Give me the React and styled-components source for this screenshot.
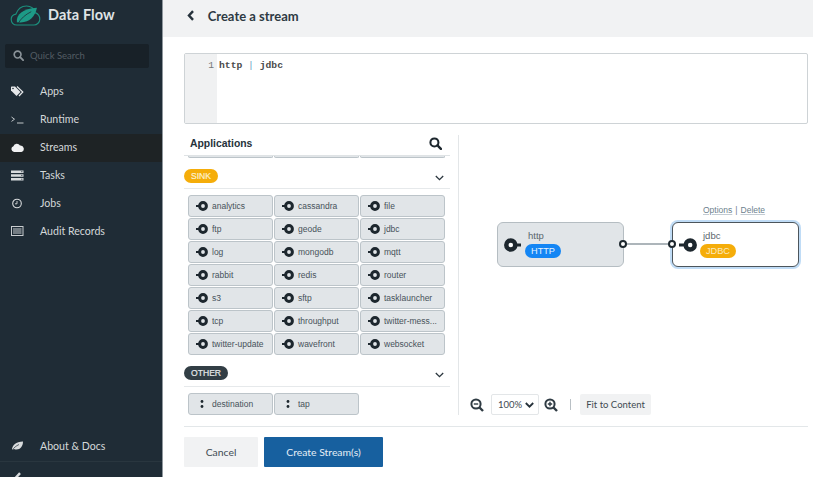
import React from 'react';
import styled, { createGlobalStyle } from 'styled-components';

const GlobalStyle = createGlobalStyle`
  html, body { margin: 0; padding: 0; height: 100%; overflow: hidden; background: #fff; }
  #root { height: 100%; }
  * { box-sizing: border-box; }
`;

const Page = styled.div`
  display: flex;
  width: 813px;
  height: 477px;
  overflow: hidden;
  font-family: 'Open Sans', sans-serif;
`;

/* sidebar */
const Sidebar = styled.aside`
  width: 163px;
  flex: none;
  display: flex;
  flex-direction: column;
  background: #1f2c36;
  border-right: 1px solid #8f979d;
`;

const Brand = styled.div`
  height: 44px;
  flex: none;
  padding: 4px 0 0 10px;
  display: flex;
  align-items: flex-start;
  gap: 7px;
  color: #dfe3e5;
  font-family: 'Lato', sans-serif;
  font-size: 14.5px;
  font-weight: 700;
  line-height: 22px;
  letter-spacing: 0.1px;

  svg { margin-top: 1px; }
`;

const Search = styled.div`
  height: 24px;
  flex: none;
  margin: 0 13px 0 5px;
  padding: 0 0 1px 8px;
  display: flex;
  align-items: center;
  gap: 6px;
  background: #182128;
  border-radius: 2px;
  color: #535c63;
  font-family: 'Lato', sans-serif;
  font-size: 9.5px;
`;

const Nav = styled.nav`
  margin-top: 10px;
  display: flex;
  flex-direction: column;
`;

const NavItem = styled.div`
  height: 28px;
  padding: 0 0 2px 11px;
  display: flex;
  align-items: center;
  gap: 16px;
  color: #d4d8da;
  font-family: 'Lato', sans-serif;
  font-size: 10.6px;
  background: ${(props) => (props.$active ? '#1e2325' : 'transparent')};

  svg { flex: none; }
`;

const SideFooter = styled.div`
  margin-top: auto;
  display: flex;
  flex-direction: column;
`;

const Collapse = styled.div`
  height: 16px;
  padding: 4px 0 0 14px;
  border-top: 1px solid #29363f;
  overflow: hidden;
`;

/* main column */
const Main = styled.main`
  flex: 1;
  min-width: 0;
  display: flex;
  flex-direction: column;
`;

const Header = styled.header`
  height: 37px;
  flex: none;
  padding: 0 0 6px 24px;
  display: flex;
  align-items: center;
  gap: 13px;
  background: #f1f2f3;
  color: #2e3a43;
  font-family: 'Lato', sans-serif;
  font-size: 13px;
  font-weight: 700;
`;

const Content = styled.div`
  flex: 1;
  padding: 16px 5px 10px 21px;
  display: flex;
  flex-direction: column;
  min-height: 0;
`;

const Editor = styled.div`
  height: 71px;
  flex: none;
  display: flex;
  border: 1px solid #ced3d6;
  border-radius: 2px;
  font-family: 'Liberation Mono', monospace;
  font-size: 9.7px;
  font-weight: 700;
  line-height: 12px;
  color: #4a4a4a;
`;

const Gutter = styled.div`
  width: 32px;
  flex: none;
  padding: 6px 3px 0 0;
  text-align: right;
  font-weight: 400;
  color: #77797b;
  background: #f0f1f2;
`;

const Code = styled.div`
  padding: 6px 0 0 2px;
  white-space: pre;
`;

const Pipe = styled.span`
  color: #6aa3c4;
  font-weight: 400;
`;

const Workspace = styled.div`
  height: 280px;
  flex: none;
  margin-top: 11px;
  display: flex;
`;

const Palette = styled.section`
  width: 275px;
  flex: none;
  padding-right: 8px;
  border-right: 1px solid #e3e6e8;
  font-family: 'Liberation Sans', sans-serif;
  overflow: hidden;
`;

const PaletteHead = styled.div`
  height: 21px;
  padding: 0 8px 4px 6px;
  display: flex;
  align-items: center;
  justify-content: space-between;
  border-bottom: 1px solid #dfe3e5;
  color: #26323b;
  font-size: 10.4px;
  font-weight: 700;
`;

const Stubs = styled.div`
  height: 2px;
  margin: 0 0 0 4px;
  display: grid;
  grid-template-columns: repeat(3, 85px);
  gap: 1px;
`;

const Stub = styled.div`
  background: #e1e5e8;
  border: solid #bcc4c9;
  border-width: 0 1px 1px 1px;
  border-radius: 0 0 2px 2px;
`;

const GroupHead = styled.div`
  height: ${(props) => props.$height}px;
  padding: ${(props) => props.$top}px 6px 0 0;
  display: flex;
  align-items: flex-start;
  justify-content: space-between;
  border-bottom: 1px solid #e6e9eb;
`;

const Badge = styled.span`
  height: 14px;
  padding: 0 7px;
  display: inline-flex;
  align-items: center;
  border-radius: 7px;
  color: ${(props) => (props.$dark ? '#e7eaec' : '#fdf0d0')};
  background: ${(props) => (props.$dark ? '#323e45' : '#f5ad0a')};
  font-size: 8.6px;
  font-weight: 400;
  -webkit-text-stroke: 0.2px currentColor;
`;

const Chevron = styled.span`
  margin-top: 6px;
  line-height: 0;
`;

const AppGrid = styled.div`
  margin: 6px 0 0 4px;
  display: grid;
  grid-template-columns: repeat(3, 85px);
  grid-auto-rows: 22px;
  gap: 1px;
`;

const AppButton = styled.div`
  padding-left: 7px;
  display: flex;
  align-items: center;
  gap: 4px;
  min-width: 0;
  background: #e1e5e8;
  border: 1px solid #bcc4c9;
  border-radius: 3px;
  color: #47525a;
  font-size: 8.5px;
  white-space: nowrap;
  overflow: hidden;

  svg { flex: none; }
`;

/* flow canvas */
const Canvas = styled.section`
  flex: 1;
  position: relative;
  min-width: 0;
  font-family: 'Liberation Sans', sans-serif;
`;

const Node = styled.div`
  position: absolute;
  top: 87px;
  left: ${(props) => props.$left}px;
  width: 127px;
  height: 45px;
  padding: 7px 0 0 30px;
  border: 1px solid ${(props) => (props.$selected ? '#4c555c' : '#b5bdc2')};
  border-radius: 6px;
  background: ${(props) => (props.$selected ? '#fff' : '#e1e5e8')};
  box-shadow: ${(props) => (props.$selected ? '0 0 0 2px #c0dcf6' : 'none')};
  color: #5a656c;
  font-size: 9.5px;
  line-height: 11px;
`;

const NodeType = styled.div`
  width: 36px;
  height: 14px;
  margin: 3px 0 0 -3px;
  display: flex;
  align-items: center;
  justify-content: center;
  border-radius: 7px;
  color: ${(props) => (props.$kind === 'sink' ? '#fbe9bd' : '#e6f2ff')};
  background: ${(props) => (props.$kind === 'sink' ? '#f5ad0a' : '#1486f4')};
  font-size: 9.2px;
`;

const Wire = styled.div`
  position: absolute;
  top: 108px;
  left: 165px;
  width: 48px;
  height: 2px;
  background: #adb5ba;
`;

const Port = styled.div`
  position: absolute;
  top: 105px;
  left: ${(props) => props.$left}px;
  width: 8px;
  height: 8px;
  border: 2px solid #1d272e;
  border-radius: 50%;
  background: #fff;
`;

const NodeIcon = styled.svg`
  position: absolute;
  top: 14px;
  left: ${(props) => props.$left}px;
`;

const NodeActions = styled.div`
  position: absolute;
  top: 70px;
  left: 244px;
  display: flex;
  gap: 3px;
  color: #6d7f8d;
  font-size: 8.5px;
  line-height: 11px;
`;

const ActionLink = styled.span`
  text-decoration: underline;
  text-decoration-color: #c3ccd3;
`;

const ZoomBar = styled.div`
  position: absolute;
  left: 11px;
  top: 259px;
  display: flex;
  align-items: center;
  font-family: 'Lato', sans-serif;
  font-size: 9.5px;
  color: #3f4a52;
`;

const ZoomSelect = styled.div`
  width: 48px;
  height: 21px;
  margin: 0 5px 0 7px;
  padding-left: 6px;
  display: flex;
  align-items: center;
  gap: 3px;
  border: 1px solid #e3e6e8;
  border-radius: 2px;
`;

const ZoomDivider = styled.div`
  width: 1px;
  height: 11px;
  margin: 0 9px 0 12px;
  background: #b9c0c5;
`;

const FitButton = styled.div`
  width: 71px;
  height: 21px;
  display: flex;
  align-items: center;
  justify-content: center;
  background: #f1f2f3;
  border-radius: 2px;
`;

/* footer */
const Footer = styled.div`
  margin-top: 11px;
  padding-top: 10px;
  display: flex;
  gap: 6px;
  border-top: 1px solid #e3e7e9;
`;

const Button = styled.div`
  height: 30px;
  width: ${(props) => props.$width}px;
  display: flex;
  align-items: center;
  justify-content: center;
  font-family: 'Lato', sans-serif;
  font-size: 10.4px;
  color: ${(props) => (props.$primary ? '#e5eef6' : '#414c54')};
  background: ${(props) => (props.$primary ? '#17609f' : '#f1f2f3')};
  border-radius: 1px;
`;

/* icons */
const SpringLogo = () => (
  <svg width="31" height="21" viewBox="0 0 32 22">
    <path d="M7 21C3 21 1 18 1 15c0-3 2-5 5-5.500C8 4 12 1 17 1c5 0 8 3 9 7 3 1 5 4 5 7 0 3-3 6-6 6H7z" fill="none" stroke="#1c8f7d" strokeWidth="1.200" />
    <path d="M7 18C6 10 13 4 28 3c-2 10-9 17-21 15z" fill="#1d9a86" />
    <path d="M8 20c3-6 8-10 14-13" fill="none" stroke="#1f2c36" strokeWidth="0.800" />
  </svg>
);

const SearchGlyph = ({ size = 11, color = '#8a9298', width = 1.800 }) => (
  <svg width={size} height={size} viewBox="0 0 12 12">
    <circle cx="5" cy="5" r="3.700" fill="none" stroke={color} strokeWidth={width} />
    <path d="M7.800 7.800L11 11" stroke={color} strokeWidth={width + 0.3} strokeLinecap="round" />
  </svg>
);

const TagsIcon = () => (
  <svg width="13" height="11" viewBox="0 0 13 11">
    <path d="M0 1v3.500L5.500 10l4-4L4 0.500H.5z" fill="#e6e8ea" />
    <path d="M6 .5l5.800 5.500-3.800 4" fill="none" stroke="#e6e8ea" strokeWidth="1.200" />
    <circle cx="2" cy="2.500" r="0.800" fill="#1f2c36" />
  </svg>
);

const TerminalIcon = () => (
  <svg width="13" height="9" viewBox="0 0 13 9">
    <path d="M.5 2l3 2.200-3 2.200" fill="none" stroke="#d4d8da" strokeWidth="0.900" />
    <path d="M6 8h6.500" stroke="#d4d8da" strokeWidth="0.900" />
  </svg>
);

const CloudIcon = () => (
  <svg width="13" height="9" viewBox="0 0 13 9">
    <path d="M3 9a3 3 0 0 1-.6-5.800A3.600 3.600 0 0 1 9 2.600 3.300 3.300 0 0 1 10.500 9H3z" fill="#f0f1f2" />
  </svg>
);

const TasksIcon = () => (
  <svg width="13" height="11" viewBox="0 0 13 11">
    <path d="M0 .5h12.500v2.500H0zM0 4.200h12.500v2.500H0zM0 8h12.500v2.500H0z" fill="#d8dbdd" />
    <path d="M10 1.700h1.500M10 5.400h1.500M10 9.200h1.500" stroke="#1f2c36" strokeWidth="0.700" />
  </svg>
);

const ClockIcon = () => (
  <svg width="13" height="11" viewBox="0 0 13 11">
    <circle cx="6" cy="5.500" r="4.300" fill="none" stroke="#d8dbdd" strokeWidth="1.100" />
    <path d="M6 3v2.800H4" fill="none" stroke="#d8dbdd" strokeWidth="0.900" />
  </svg>
);

const RecordsIcon = () => (
  <svg width="13" height="10" viewBox="0 0 13 10">
    <rect x="0.500" y="0.500" width="11.500" height="9" fill="none" stroke="#c9cdd0" strokeWidth="1" />
    <path d="M2 3h8.500M2 5h8.500M2 7h8.500" stroke="#c9cdd0" strokeWidth="1" />
  </svg>
);

const LeafIcon = () => (
  <svg width="13" height="10" viewBox="0 0 13 10">
    <path d="M1 9c0-5 4-8 11-8.500C12 6 8 10 3 8z" fill="#d8dbdd" />
    <path d="M1 9.500C3 6.500 5 5 8 3.500" stroke="#1f2c36" strokeWidth="0.700" fill="none" />
  </svg>
);

const ChevronLeft = ({ color, size = 9 }) => (
  <svg width={size * 0.7} height={size} viewBox="0 0 7 10">
    <path d="M5.500 1L1.800 5l3.700 4" fill="none" stroke={color} strokeWidth="2.200" />
  </svg>
);

const ChevronDown = ({ width = 9, color = '#2b363e', stroke = 1.300 }) => (
  <svg width={width} height="6" viewBox="0 0 9 6">
    <path d="M.8 1l3.700 3.700L8.200 1" fill="none" stroke={color} strokeWidth={stroke} />
  </svg>
);

const SinkPort = () => (
  <svg width="12" height="10" viewBox="0 0 12 10">
    <path d="M0 5h4" stroke="#1d272e" strokeWidth="2" />
    <circle cx="7" cy="5" r="3.400" fill="#e1e5e8" stroke="#1d272e" strokeWidth="3" />
  </svg>
);

const Dots = () => (
  <svg width="12" height="8" viewBox="0 0 12 8">
    <circle cx="6" cy="1.500" r="1.400" fill="#1d272e" />
    <circle cx="6" cy="6.500" r="1.400" fill="#1d272e" />
  </svg>
);

const ZoomOut = () => (
  <svg width="14" height="14" viewBox="0 0 14 14">
    <circle cx="6" cy="6" r="4.600" fill="none" stroke="#2f3b43" strokeWidth="2" />
    <path d="M9.500 9.500L13 13" stroke="#2f3b43" strokeWidth="2.400" />
    <path d="M3.800 6h4.400" stroke="#2f3b43" strokeWidth="1.400" />
  </svg>
);

const ZoomIn = () => (
  <svg width="14" height="14" viewBox="0 0 14 14">
    <circle cx="6" cy="6" r="4.600" fill="none" stroke="#2f3b43" strokeWidth="2" />
    <path d="M9.500 9.500L13 13" stroke="#2f3b43" strokeWidth="2.400" />
    <path d="M3.800 6h4.400M6 3.800v4.400" stroke="#2f3b43" strokeWidth="1.400" />
  </svg>
);

const navItems = [
  { label: 'Apps', icon: <TagsIcon /> },
  { label: 'Runtime', icon: <TerminalIcon /> },
  { label: 'Streams', icon: <CloudIcon />, active: true },
  { label: 'Tasks', icon: <TasksIcon /> },
  { label: 'Jobs', icon: <ClockIcon /> },
  { label: 'Audit Records', icon: <RecordsIcon /> },
];

const sinks = [
  'analytics', 'cassandra', 'file',
  'ftp', 'geode', 'jdbc',
  'log', 'mongodb', 'mqtt',
  'rabbit', 'redis', 'router',
  's3', 'sftp', 'tasklauncher',
  'tcp', 'throughput', 'twitter-mess...',
  'twitter-update', 'wavefront', 'websocket',
];

const App = () => (
  <Page>
    <GlobalStyle />
    <Sidebar>
      <Brand>
        <SpringLogo />
        <span>Data Flow</span>
      </Brand>
      <Search>
        <SearchGlyph />
        <span>Quick Search</span>
      </Search>
      <Nav>
        {navItems.map((item) => (
          <NavItem key={item.label} $active={item.active}>
            {item.icon}
            {item.label}
          </NavItem>
        ))}
      </Nav>
      <SideFooter>
        <NavItem>
          <LeafIcon />
          About &amp; Docs
        </NavItem>
        <Collapse>
          <ChevronLeft color="#d8dbdd" size={11} />
        </Collapse>
      </SideFooter>
    </Sidebar>
    <Main>
      <Header>
        <ChevronLeft color="#26323b" size={11} />
        Create a stream
      </Header>
      <Content>
        <Editor>
          <Gutter>1</Gutter>
          <Code>http <Pipe>|</Pipe> jdbc</Code>
        </Editor>
        <Workspace>
          <Palette>
            <PaletteHead>
              Applications
              <SearchGlyph size={13} color="#1d272e" width={1.900} />
            </PaletteHead>
            <Stubs>
              <Stub />
              <Stub />
              <Stub />
            </Stubs>
            <GroupHead $height={31} $top={11}>
              <Badge>SINK</Badge>
              <Chevron><ChevronDown /></Chevron>
            </GroupHead>
            <AppGrid>
              {sinks.map((name) => (
                <AppButton key={name}>
                  <SinkPort />
                  {name}
                </AppButton>
              ))}
            </AppGrid>
            <GroupHead $height={32} $top={11}>
              <Badge $dark>OTHER</Badge>
              <Chevron><ChevronDown /></Chevron>
            </GroupHead>
            <AppGrid>
              <AppButton>
                <Dots />
                destination
              </AppButton>
              <AppButton>
                <Dots />
                tap
              </AppButton>
            </AppGrid>
          </Palette>
          <Canvas>
            <NodeActions>
              <ActionLink>Options</ActionLink>
              <span>|</span>
              <ActionLink>Delete</ActionLink>
            </NodeActions>
            <Node $left={38}>
              <NodeIcon $left={6} width="18" height="16" viewBox="0 0 18 16">
                <circle cx="6.800" cy="8" r="4.500" fill="#fff" stroke="#1d272e" strokeWidth="4.500" />
                <path d="M12 8h5" stroke="#1d272e" strokeWidth="3" />
              </NodeIcon>
              http
              <NodeType>HTTP</NodeType>
            </Node>
            <Node $left={213} $selected>
              <NodeIcon $left={6} width="18" height="16" viewBox="0 0 18 16">
                <circle cx="11.200" cy="8" r="4.500" fill="#fff" stroke="#1d272e" strokeWidth="4.500" />
                <path d="M0 8h6" stroke="#1d272e" strokeWidth="3" />
              </NodeIcon>
              jdbc
              <NodeType $kind="sink">JDBC</NodeType>
            </Node>
            <Wire />
            <Port $left={160} />
            <Port $left={209} />
            <ZoomBar>
              <ZoomOut />
              <ZoomSelect>
                100%
                <ChevronDown color="#26323b" stroke={1.800} />
              </ZoomSelect>
              <ZoomIn />
              <ZoomDivider />
              <FitButton>Fit to Content</FitButton>
            </ZoomBar>
          </Canvas>
        </Workspace>
        <Footer>
          <Button $width={74}>Cancel</Button>
          <Button $width={119} $primary>Create Stream(s)</Button>
        </Footer>
      </Content>
    </Main>
  </Page>
);

export default App;
